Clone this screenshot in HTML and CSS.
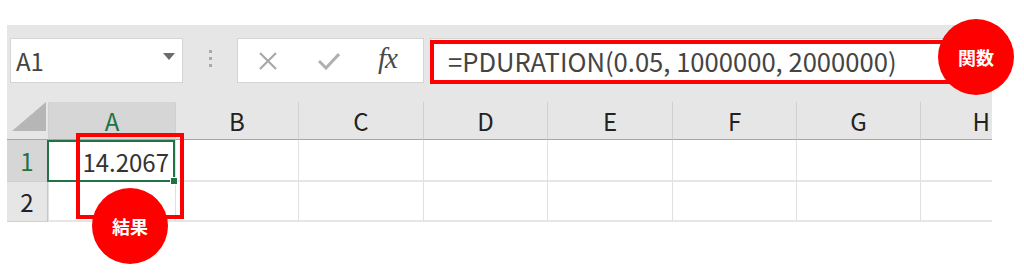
FILE: index.html
```html
<!DOCTYPE html>
<html lang="ja">
<head>
    <meta charset="utf-8">
    <title>PDURATION</title>
    <link rel="stylesheet" href="styles.css">
</head>
<body>
    <div class="page">
        <div class="sheet">
            <div class="toolbar">
                <div class="namebox">
                    <span>A1</span>
                    <svg class="caret" width="12" height="7" viewBox="0 0 12 7"><path d="M0 0h12L6 7z" fill="#6b6b6b"/></svg>
                </div>
                <div class="grip"><i></i><i></i><i></i></div>
                <div class="fxbtns">
                    <svg width="20" height="20" viewBox="0 0 20 20"><path d="M2 2L18 18M18 2L2 18" stroke="#a8a8a8" stroke-width="2.2" fill="none"/></svg>
                    <svg width="22" height="18" viewBox="0 0 22 18"><path d="M1 9l7 7L21 2" stroke="#b0b0b0" stroke-width="3" fill="none"/></svg>
                    <span class="fx">fx</span>
                </div>
                <div class="formula">=PDURATION(0.05, 1000000, 2000000)</div>
            </div>

            <div class="grid">
                <div class="corner"><svg width="34" height="29" viewBox="0 0 34 29"><path d="M34 0V29H0z" fill="#b6b6b6"/></svg></div>
                <div class="colhead sel">A</div>
                <div class="colhead">B</div>
                <div class="colhead">C</div>
                <div class="colhead">D</div>
                <div class="colhead">E</div>
                <div class="colhead">F</div>
                <div class="colhead">G</div>
                <div class="colhead last">H</div>

                <div class="rowhead sel">1</div>
                <div class="cell active">14.2067<span class="handle"></span></div>
                <div class="cell"></div>
                <div class="cell"></div>
                <div class="cell"></div>
                <div class="cell"></div>
                <div class="cell"></div>
                <div class="cell"></div>
                <div class="cell"></div>

                <div class="rowhead">2</div>
                <div class="cell"></div>
                <div class="cell"></div>
                <div class="cell"></div>
                <div class="cell"></div>
                <div class="cell"></div>
                <div class="cell"></div>
                <div class="cell"></div>
                <div class="cell"></div>
            </div>
        </div>

        <!-- annotations -->
        <div class="box box-formula"></div>
        <div class="badge badge-formula">関数</div>
        <div class="box box-result"></div>
        <div class="badge badge-result">結果</div>
    </div>
</body>
</html>
```

FILE: styles.css
```css
body { margin: 0; background: #fff; font-family: "Noto Sans CJK JP", "Noto Sans", sans-serif; color: #333; }
.page { position: relative; width: 1024px; height: 280px; overflow: hidden; }

.sheet { margin: 25px 0 0 7px; width: 985px; background: #e6e6e6; }

.toolbar { display: flex; align-items: flex-start; height: 77px; padding: 13px 0 0 3px; box-sizing: border-box; }
.namebox { width: 173px; height: 45px; box-sizing: border-box; background: #fff; border: 1px solid #d4d4d4; display: flex; align-items: center; justify-content: space-between; padding: 0 7px 0 5px; font-size: 24px; color: #444; }
.caret { margin-top: -8px; }
.grip { width: 54px; display: flex; flex-direction: column; align-items: center; gap: 4px; padding-top: 12px; }
.grip i { width: 3px; height: 3px; background: #a9a9a9; }
.fxbtns { width: 187px; height: 45px; box-sizing: border-box; background: #fff; border: 1px solid #d4d4d4; display: flex; align-items: center; gap: 40px; padding: 0 0 0 20px; }
.fx { font-family: "Liberation Serif", serif; font-style: italic; font-size: 29px; color: #4a4a4a; margin: -5px 0 0 -2px; letter-spacing: -1px; }
.formula { margin-left: 6px; flex: 1; height: 45px; box-sizing: border-box; background: #fff; border: 1px solid #d4d4d4; padding: 0 0 0 17px; display: flex; align-items: center; font-size: 25.6px; color: #444; white-space: nowrap; }

.grid { display: grid; grid-template-columns: 41px 127px 123px 125px 124px 125px 124px 124px 72px; grid-template-rows: 38px 42px 40px; background: #fff; }
.corner { background: #e6e6e6; border-bottom: 1px solid #a6a6a6; display: flex; align-items: flex-end; justify-content: flex-end; padding: 0 2px 8px 0; }
.colhead { background: #e6e6e6; border-left: 1px solid #d0d0d0; border-bottom: 1px solid #a6a6a6; display: flex; align-items: center; justify-content: center; font-size: 24px; color: #222; }
.colhead.last { justify-content: flex-end; padding-right: 2px; }
.colhead.sel { background: #d6d6d6; color: #217346; }
.rowhead { background: #e6e6e6; border-bottom: 1px solid #d0d0d0; border-right: 1px solid #c6c6c6; display: flex; align-items: center; justify-content: center; font-size: 24px; color: #222; }
.rowhead.sel { background: #d6d6d6; color: #217346; }
.cell { border-left: 1px solid #e0e0e0; border-bottom: 2px solid #e6e6e6; }
.cell.active { position: relative; border: 2px solid #217346; margin-left: -1px; display: flex; align-items: center; justify-content: flex-end; padding-right: 4px; font-size: 24px; color: #333; }
.handle { position: absolute; right: -5px; bottom: -5px; width: 6px; height: 6px; background: #217346; border: 1px solid #fff; }

.box { position: absolute; border: 4px solid #f00; box-sizing: border-box; }
.box-formula { left: 430px; top: 40px; width: 530px; height: 44px; }
.box-result { left: 76px; top: 133px; width: 108px; height: 86px; }
.badge { position: absolute; border-radius: 50%; background: #f00; color: #fff; font-weight: bold; font-size: 18px; display: flex; align-items: center; justify-content: center; }
.badge-formula { left: 938px; top: 19px; width: 76px; height: 76px; }
.badge-result { left: 92px; top: 188px; width: 76px; height: 76px; }
```
